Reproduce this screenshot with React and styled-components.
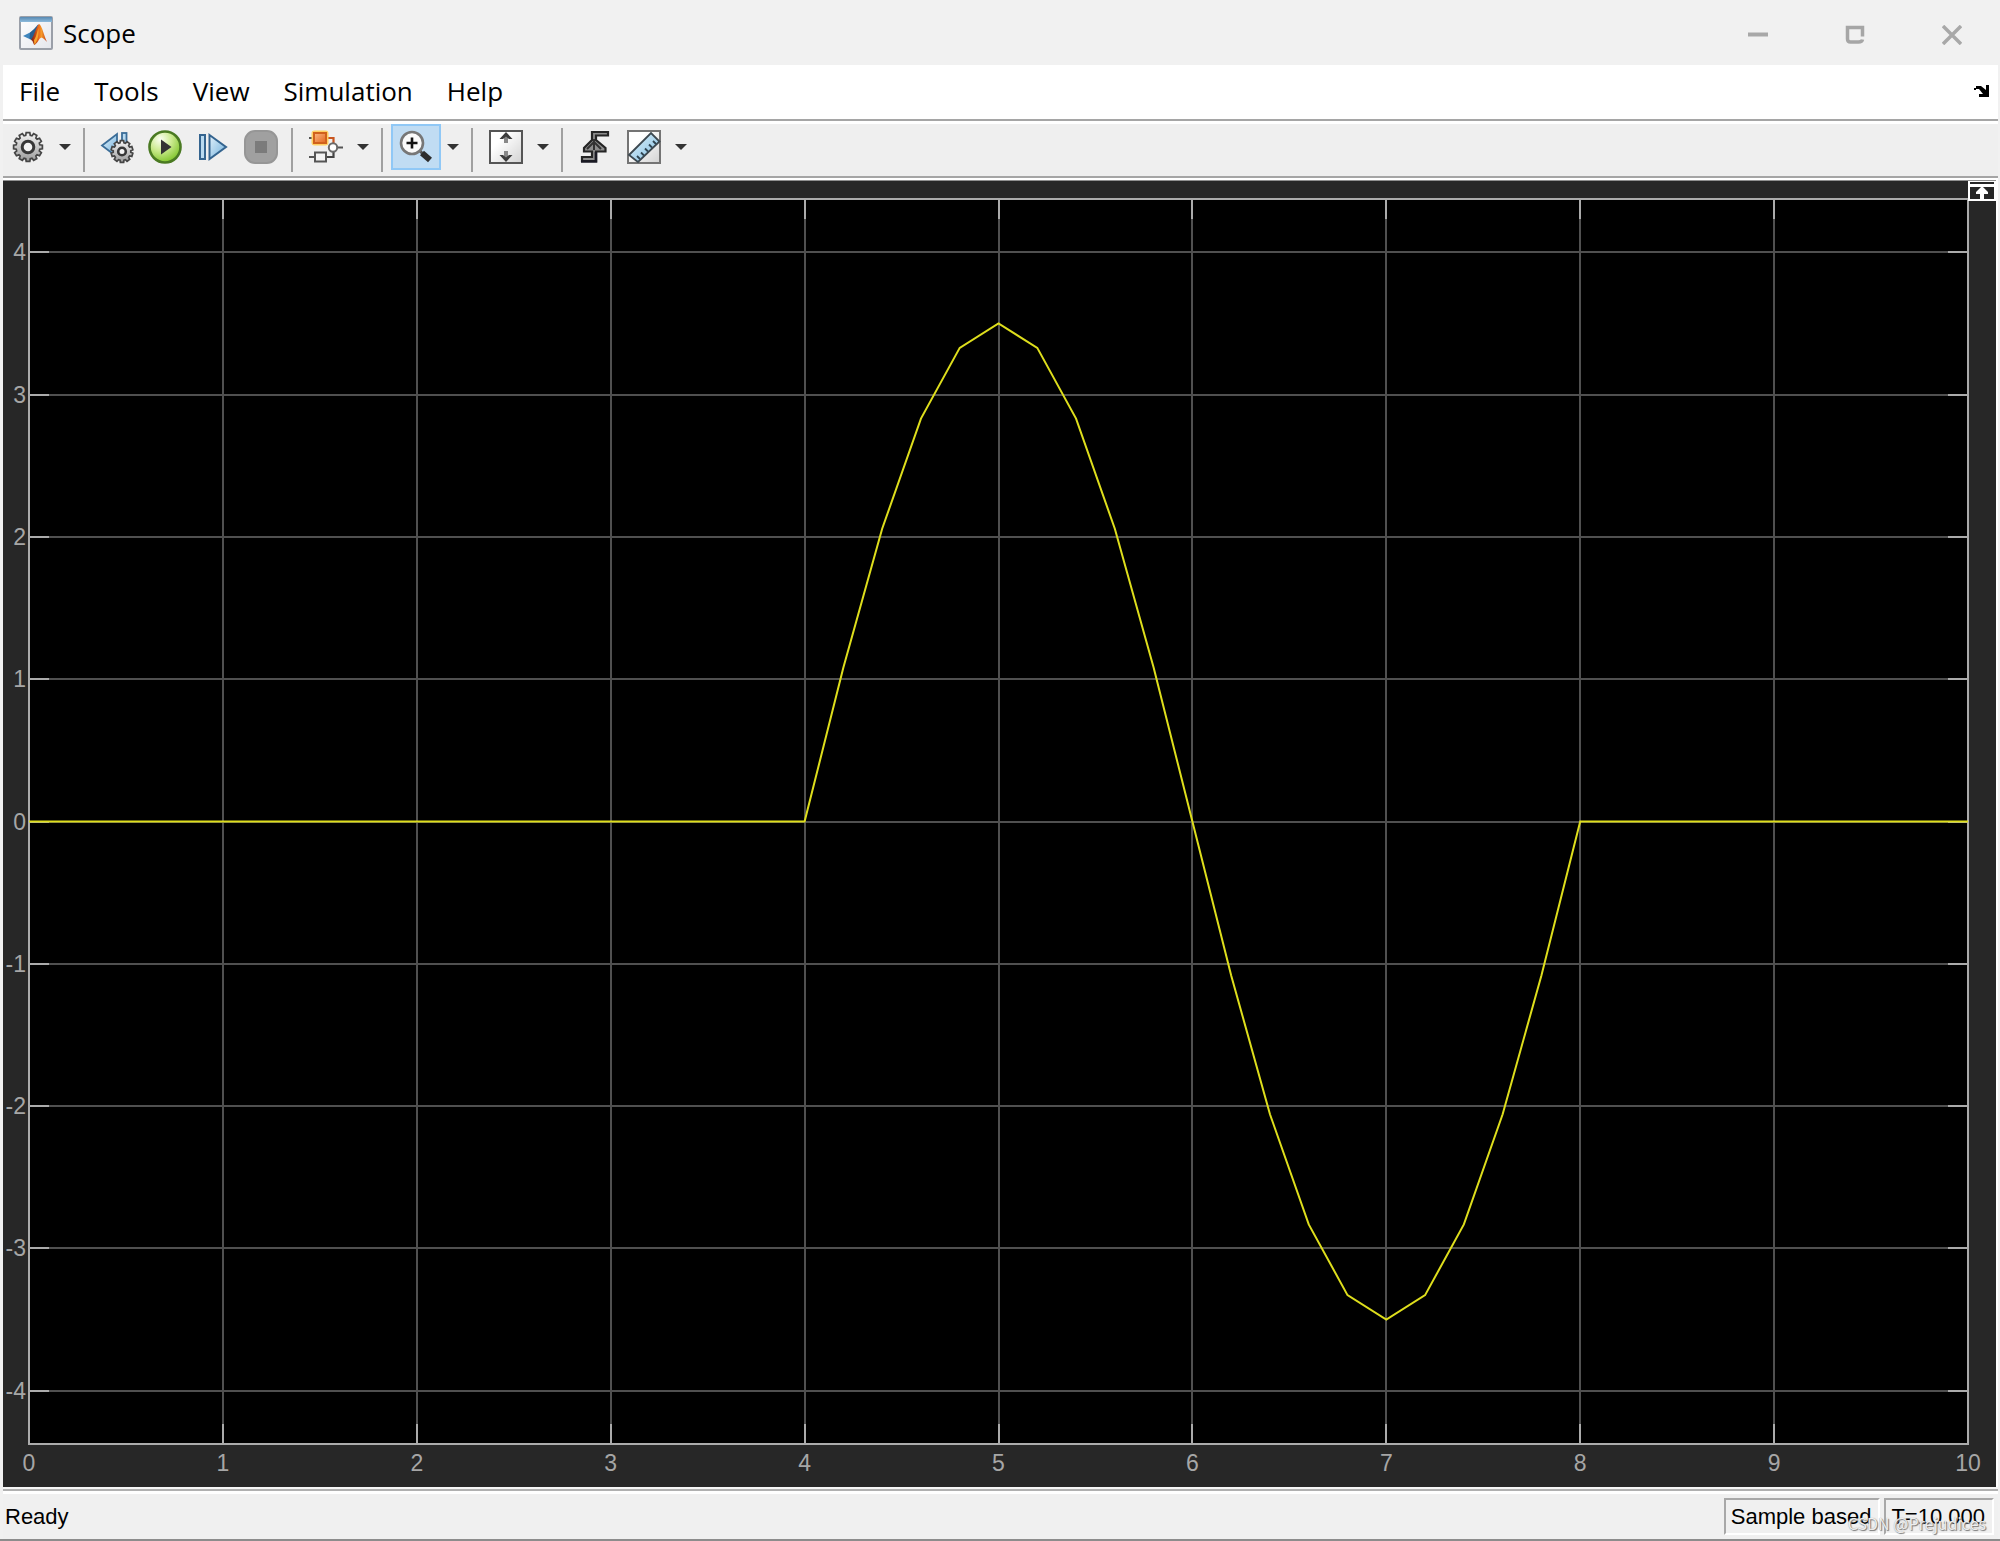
import React from 'react'
import styled, { createGlobalStyle } from 'styled-components'

const GlobalStyle = createGlobalStyle`
  * {
    box-sizing: border-box;
  }
  body {
    margin: 0;
    background: #f1f1f1;
  }
`

const Window = styled.div`
  display: flex;
  flex-direction: column;
  height: 100vh;
  min-height: 400px;
  background: #f1f1f1;
  border-bottom: 2px solid #8c8c8c;
  color: #000;
`

const TitleBar = styled.header`
  display: flex;
  align-items: center;
  height: 65px;
  padding-left: 19px;
`

const Title = styled.h1`
  flex: 1;
  margin: 0 0 0 10px;
  font-family: 'Open Sans', 'Noto Sans', sans-serif;
  font-size: 26px;
  font-weight: 400;
  line-height: 36px;
`

const WindowButton = styled.button`
  display: flex;
  align-items: center;
  justify-content: center;
  width: 97px;
  height: 65px;
  padding: 4px 0 0;
  border: none;
  background: none;
`

const Frame = styled.div`
  display: flex;
  flex-direction: column;
  flex: 1;
  min-height: 0;
  padding: 0 2px 0 3px;
`

const MenuBar = styled.nav`
  display: flex;
  align-items: center;
  gap: 34px;
  height: 54px;
  padding: 0 8px 2px 16px;
  background: #fff;
`

const MenuItem = styled.button`
  padding: 0;
  border: none;
  background: none;
  color: #000;
  font-family: 'Open Sans', 'Noto Sans', sans-serif;
  font-size: 26px;
  line-height: 34px;
`

const DockButton = styled.button`
  display: flex;
  margin-left: auto;
  padding: 0;
  border: none;
  background: none;
`

const Toolbar = styled.div`
  display: flex;
  align-items: flex-start;
  height: 59px;
  border-top: 2px solid #a5a5a5;
  border-bottom: 2px solid #a5a5a5;
  padding-top: 3px;
  background: linear-gradient(#fff 0 3px, #efefef 3px);
`

const ToolButton = styled.button`
  display: flex;
  align-items: center;
  justify-content: center;
  width: ${(props) => (props.$wide ? '50px' : '48px')};
  height: 46px;
  padding: 0;
  border: 2px solid ${(props) => (props.$active ? '#90c8f6' : 'transparent')};
  background: ${(props) => (props.$active ? '#c0dcf3' : 'none')};
`

const ArrowButton = styled.button`
  display: flex;
  align-items: center;
  justify-content: center;
  width: 24px;
  height: 46px;
  padding: 0;
  border: none;
  background: none;
`

const Separator = styled.span`
  width: 2px;
  height: 44px;
  margin: 4px 8px 0 6px;
  background: #a0a0a0;
`

const ScopePanel = styled.main`
  position: relative;
  flex: 1;
  min-height: 0;
  margin-right: 2px;
  padding: 18px 28px 43px 26px;
  border-top: 1px solid #8f8f8f;
  background: #272727;
`

const PanelEdge = styled.div`
  flex: 1;
  display: flex;
  flex-direction: column;
  min-height: 0;
  padding-top: 2px;
  background: #fff;
`

const Plot = styled.svg`
  display: block;
  width: 100%;
  height: 100%;
  overflow: visible;
`

const AxisText = styled.text`
  fill: #a6a6a6;
  font-family: 'Liberation Sans', Arial, sans-serif;
  font-size: 23px;
`

const MaximizeButton = styled.button`
  position: absolute;
  top: 0;
  right: 0;
  display: flex;
  padding: 0;
  border: none;
  background: #fff;
`

const StatusBar = styled.footer`
  position: relative;
  display: flex;
  align-items: center;
  gap: 4px;
  height: 52px;
  padding: 7px 4px 0 2px;
  background: linear-gradient(#f6f6f6 0 2px, #b0b0b0 2px 4px, #fff 4px 7px, #f0f0f0 7px);
  font-family: 'Liberation Sans', Arial, sans-serif;
  font-size: 22px;
  line-height: 33px;
`

const StatusText = styled.span`
  flex: 1;
`

const StatusCell = styled.span`
  height: 37px;
  padding: 0 7px 0 5px;
  border: 2px solid;
  border-color: #a8a8a8 #fff #fff #a8a8a8;
`

const Watermark = styled.span`
  position: absolute;
  right: 12px;
  bottom: 6px;
  color: rgba(255, 255, 255, 0.85);
  font-family: 'Noto Sans CJK SC', sans-serif;
  font-size: 16px;
  line-height: 20px;
  text-shadow: 1px 1px 1px #777, 0 0 1px #999;
`

// outline of a toothed wheel
const gearPath = (cx, cy, outer, inner, teeth) => {
  const step = (Math.PI * 2) / teeth
  const points = []
  for (let i = 0; i < teeth; i++) {
    const a = i * step - Math.PI / 2
    const corners = [
      [inner, -0.36],
      [outer, -0.24],
      [outer, 0.24],
      [inner, 0.36],
    ]
    corners.forEach(([r, k]) => {
      const x = cx + r * Math.cos(a + k * step)
      const y = cy + r * Math.sin(a + k * step)
      points.push(`${x.toFixed(2)} ${y.toFixed(2)}`)
    })
  }
  return `M${points.join('L')}Z`
}

const Icon = ({ children, size = 34 }) => (
  <svg width={size} height={size} viewBox="0 0 34 34" fill="none" aria-hidden="true">
    {children}
  </svg>
)

const AppIcon = () => (
  <svg width="34" height="34" viewBox="0 0 34 34" aria-hidden="true">
    <defs>
      <linearGradient id="appBar" x1="0" y1="0" x2="0" y2="1">
        <stop offset="0" stopColor="#5889b2" />
        <stop offset="1" stopColor="#8dbbdc" />
      </linearGradient>
      <linearGradient id="appPage" x1="0" y1="0" x2="1" y2="1">
        <stop offset="0" stopColor="#fff" />
        <stop offset="1" stopColor="#e4e6ec" />
      </linearGradient>
      <linearGradient id="appFlame" x1="0" y1="0" x2="1" y2="0">
        <stop offset="0" stopColor="#7a1c12" />
        <stop offset="0.45" stopColor="#e8641b" />
        <stop offset="0.65" stopColor="#f59a2a" />
        <stop offset="1" stopColor="#c23a14" />
      </linearGradient>
    </defs>
    <rect x="1" y="1" width="32" height="32" rx="1" fill="url(#appPage)" stroke="#9a9fa8" strokeWidth="2" />
    <rect x="1" y="1" width="32" height="5" fill="url(#appBar)" />
    <path d="M4 20L11 16.500L14 18L10.500 23Z" fill="#3f86bd" />
    <path d="M11 16.500L15 13L19.500 8L17 17L12.500 24L10.500 23Z" fill="#285f91" />
    <path d="M20 8C17 11 16 18 12 24C14 24 14 28 15.500 29C19 27 20 22 22.500 21.500C24.500 22 26 24 28 26C25 20 23 9 20 8Z" fill="url(#appFlame)" />
    <path d="M15 24C17 22 18 16 19.500 12C20 18 19 24 15.500 29Z" fill="#f8a32c" />
  </svg>
)

const GearIcon = () => (
  <Icon>
    <defs>
      <linearGradient id="gearFill" x1="0" y1="0" x2="0" y2="1">
        <stop offset="0" stopColor="#f5f5f5" />
        <stop offset="1" stopColor="#9a9a9a" />
      </linearGradient>
    </defs>
    <path d={gearPath(17, 17, 14.5, 12, 12)} fill="url(#gearFill)" stroke="#454545" strokeWidth="1.700" />
    <circle cx="17" cy="17" r="5.800" fill="#f4f4f4" stroke="#383838" strokeWidth="3" />
  </Icon>
)

const StepBackIcon = () => (
  <Icon>
    <defs>
      <linearGradient id="blueFill" x1="0" y1="0" x2="1" y2="1">
        <stop offset="0" stopColor="#e3f1fb" />
        <stop offset="1" stopColor="#6fb0dc" />
      </linearGradient>
    </defs>
    <path d="M17 4V27L2 15.500Z" fill="url(#blueFill)" stroke="#3b6d98" strokeWidth="1.800" />
    <rect x="22" y="3" width="4.500" height="14" fill="#b9daf0" stroke="#3b6d98" strokeWidth="1.800" />
    <path d={gearPath(22, 21.5, 11, 8.8, 10)} fill="url(#gearFill)" stroke="#454545" strokeWidth="1.700" />
    <circle cx="22" cy="21.500" r="3.800" fill="#f4f4f4" stroke="#383838" strokeWidth="2.600" />
  </Icon>
)

const RunIcon = () => (
  <Icon>
    <defs>
      <radialGradient id="runFill" cx="0.35" cy="0.25" r="0.8">
        <stop offset="0" stopColor="#fbfef2" />
        <stop offset="0.45" stopColor="#cdeb92" />
        <stop offset="1" stopColor="#7bc225" />
      </radialGradient>
    </defs>
    <circle cx="17" cy="17" r="15.500" fill="url(#runFill)" stroke="#4a7a22" strokeWidth="2.600" />
    <path d="M13 9.500L23.500 17L13 24.500Z" fill="#333" />
  </Icon>
)

const StepIcon = () => (
  <Icon>
    <rect x="4" y="5" width="5" height="24" fill="#b9daf0" stroke="#34648f" strokeWidth="2" />
    <path d="M13.500 5L30 17L13.500 29Z" fill="url(#blueFill)" stroke="#34648f" strokeWidth="2" />
  </Icon>
)

const StopIcon = () => (
  <Icon>
    <rect x="1" y="1" width="32" height="32" rx="10" fill="#a0a0a0" stroke="#969696" strokeWidth="2" />
    <rect x="11" y="11" width="12" height="12" fill="#7b7b7b" />
  </Icon>
)

const HighlightIcon = () => (
  <Icon>
    <defs>
      <linearGradient id="blockFill" x1="0" y1="0" x2="1" y2="1">
        <stop offset="0" stopColor="#fbb884" />
        <stop offset="1" stopColor="#e2661c" />
      </linearGradient>
    </defs>
    <path d="M0 8H5M0 27H6M28 17.500H34" stroke="#555" strokeWidth="2.200" />
    <path d="M18 8H24.500V14" stroke="#c9551f" strokeWidth="2.200" />
    <path d="M17 27H24.500V22" stroke="#444" strokeWidth="2.200" />
    <rect x="2.500" y="0.500" width="17" height="15" rx="3" fill="#ffcf62" />
    <rect x="5" y="3" width="12" height="10" fill="url(#blockFill)" stroke="#d0611c" strokeWidth="2" />
    <rect x="6" y="22.500" width="11" height="9" fill="#f3f3f3" stroke="#555" strokeWidth="2" />
    <circle cx="24" cy="17.500" r="4.200" fill="#fff" stroke="#6a6a6a" strokeWidth="2" />
  </Icon>
)

const ZoomIcon = () => (
  <Icon>
    <path d="M20 20L24 24" stroke="#555" strokeWidth="3" />
    <path d="M23 23L31 30" stroke="#2d2d2d" strokeWidth="6" />
    <circle cx="13" cy="13" r="11" fill="#fafafa" stroke="#777" strokeWidth="2.600" />
    <path d="M13 7.500V18.500M7.500 13H18.500" stroke="#111" strokeWidth="2.600" />
  </Icon>
)

const FitIcon = () => (
  <Icon>
    <defs>
      <linearGradient id="pageFill" x1="0" y1="0" x2="1" y2="1">
        <stop offset="0.300" stopColor="#fff" />
        <stop offset="1" stopColor="#d2d2d2" />
      </linearGradient>
    </defs>
    <rect x="1" y="1" width="32" height="32" fill="url(#pageFill)" stroke="#555" strokeWidth="2" />
    <path d="M17 5V13M17 29V21" stroke="#888" strokeWidth="4" />
    <path d="M17 2L23.500 9H20L17 6.500L14 9H10.500ZM17 32L23.500 25H20L17 27.500L14 25H10.500Z" fill="#3c3c3c" />
  </Icon>
)

const TriggerIcon = () => (
  <Icon>
    <path
      d="M14 2H30V5.500H18V10L27.500 18V21.500H18V31H4V27H14V21.500H6V18L14 10Z"
      fill="#8d8d8d"
      stroke="#252525"
      strokeWidth="2.200"
    />
    <path d="M16 9V20M9 19L16 12L23 19" stroke="#333" strokeWidth="2" />
    <path d="M3 31.500H18V22" stroke="#191923" strokeWidth="2.600" />
  </Icon>
)

const MeasureIcon = () => (
  <Icon>
    <defs>
      <linearGradient id="rulerFill" x1="0" y1="0" x2="1" y2="1">
        <stop offset="0" stopColor="#e4f4fc" />
        <stop offset="1" stopColor="#7dbbe0" />
      </linearGradient>
    </defs>
    <rect x="1" y="1" width="32" height="32" fill="url(#pageFill)" stroke="#747474" strokeWidth="2" />
    <path d="M2 25L24 3L32.500 11.500L11 32Z" fill="url(#rulerFill)" stroke="#3c4850" strokeWidth="1.800" />
    <path d="M13 29L10 26M17 25.500L14 22.500M21 21.500L18 18.500M25 17.500L22 14.500M29 14L26 11" stroke="#2f4552" strokeWidth="1.800" />
  </Icon>
)

const DropArrow = ({ label }) => (
  <ArrowButton aria-label={label}>
    <svg width="12" height="6" viewBox="0 0 12 6" aria-hidden="true">
      <path d="M0 0H12L6 6Z" fill="#333" />
    </svg>
  </ArrowButton>
)

const menus = ['File', 'Tools', 'View', 'Simulation', 'Help']

const T_END = 10
const Y_MAX = 4.375
const xTicks = [0, 1, 2, 3, 4, 5, 6, 7, 8, 9, 10]
const yTicks = [4, 3, 2, 1, 0, -1, -2, -3, -4]

// one sine period between t = 4 and t = 8, zero elsewhere
const signal = (t) => (t < 4 || t > 8 ? 0 : 3.5 * Math.sin(((t - 4) * Math.PI) / 2))

const samples = []
for (let i = 0; i <= 50; i++) {
  const t = i / 5
  samples.push(`${t},${(-signal(t)).toFixed(4)}`)
}

const xPos = (x) => `${(x / T_END) * 100}%`
const yPos = (y) => `${((Y_MAX - y) / (Y_MAX * 2)) * 100}%`

const ScopePlot = () => (
  <Plot role="img" aria-label="Scope signal">
    <rect width="100%" height="100%" fill="#000" />
    <g stroke="#505050" strokeWidth="2" shapeRendering="crispEdges">
      {xTicks.slice(1, -1).map((x) => (
        <line key={x} x1={xPos(x)} x2={xPos(x)} y1="0" y2="100%" />
      ))}
      {yTicks.map((y) => (
        <line key={y} x1="0" x2="100%" y1={yPos(y)} y2={yPos(y)} />
      ))}
    </g>
    <g stroke="#ababab" strokeWidth="2" shapeRendering="crispEdges">
      {xTicks.slice(1, -1).map((x) => (
        <React.Fragment key={x}>
          <line x1={xPos(x)} x2={xPos(x)} y1="0" y2="20" />
          <svg y="100%" overflow="visible">
            <line x1={xPos(x)} x2={xPos(x)} y1="-20" y2="0" />
          </svg>
        </React.Fragment>
      ))}
      {yTicks.map((y) => (
        <React.Fragment key={y}>
          <line x1="0" x2="20" y1={yPos(y)} y2={yPos(y)} />
          <svg x="100%" overflow="visible">
            <line x1="-20" x2="0" y1={yPos(y)} y2={yPos(y)} />
          </svg>
        </React.Fragment>
      ))}
      <rect width="100%" height="100%" fill="none" />
    </g>
    <svg
      width="100%"
      height="100%"
      viewBox={`0 ${-Y_MAX} ${T_END} ${Y_MAX * 2}`}
      preserveAspectRatio="none"
    >
      <polyline
        points={samples.join(' ')}
        fill="none"
        stroke="#dede1c"
        strokeWidth="2"
        vectorEffect="non-scaling-stroke"
      />
    </svg>
    {yTicks.map((y) => (
      <AxisText key={y} x="-3" y={yPos(y)} dy="8" textAnchor="end">
        {y}
      </AxisText>
    ))}
    <svg y="100%" overflow="visible">
      {xTicks.map((x) => (
        <AxisText key={x} x={xPos(x)} y="27" textAnchor="middle">
          {x}
        </AxisText>
      ))}
    </svg>
  </Plot>
)

const App = () => (
  <>
    <GlobalStyle />
    <Window>
      <TitleBar>
        <AppIcon />
        <Title>Scope</Title>
        <WindowButton aria-label="Minimize">
          <svg width="20" height="20" viewBox="0 0 20 20">
            <path d="M0 9.500H20" stroke="#a8a8a8" strokeWidth="4" />
          </svg>
        </WindowButton>
        <WindowButton aria-label="Restore">
          <svg width="20" height="20" viewBox="0 0 20 20" fill="none">
            <path d="M17.500 11.500V2.500H2.500V14Q2.500 17 5.500 17H13.500Q17 17 17.500 14.500" stroke="#a6a6a6" strokeWidth="3.500" />
          </svg>
        </WindowButton>
        <WindowButton aria-label="Close">
          <svg width="20" height="20" viewBox="0 0 20 20" fill="none">
            <path d="M1 1L19 19M19 1L1 19" stroke="#a8a8a8" strokeWidth="3.500" />
          </svg>
        </WindowButton>
      </TitleBar>
      <Frame>
        <MenuBar>
          {menus.map((name) => (
            <MenuItem key={name}>{name}</MenuItem>
          ))}
          <DockButton aria-label="Dock window">
            <svg width="16" height="12" viewBox="0 0 16 12" aria-hidden="true">
              <path d="M0 3H2V1H7L12 5V0H15V12H5V9H9L5 4H2V5H0Z" fill="#000" />
            </svg>
          </DockButton>
        </MenuBar>
        <Toolbar role="toolbar">
          <ToolButton $wide aria-label="Configuration properties">
            <GearIcon />
          </ToolButton>
          <DropArrow label="Configuration options" />
          <Separator />
          <ToolButton aria-label="Stepping options">
            <StepBackIcon />
          </ToolButton>
          <ToolButton aria-label="Run">
            <RunIcon />
          </ToolButton>
          <ToolButton aria-label="Step forward">
            <StepIcon />
          </ToolButton>
          <ToolButton aria-label="Stop">
            <StopIcon />
          </ToolButton>
          <Separator />
          <ToolButton $wide aria-label="Highlight block">
            <HighlightIcon />
          </ToolButton>
          <DropArrow label="Highlight options" />
          <Separator />
          <ToolButton $wide $active aria-label="Zoom">
            <ZoomIcon />
          </ToolButton>
          <DropArrow label="Zoom options" />
          <Separator />
          <ToolButton $wide aria-label="Scale axes">
            <FitIcon />
          </ToolButton>
          <DropArrow label="Scale options" />
          <Separator />
          <ToolButton aria-label="Triggers">
            <TriggerIcon />
          </ToolButton>
          <ToolButton $wide aria-label="Measurements">
            <MeasureIcon />
          </ToolButton>
          <DropArrow label="Measurement options" />
        </Toolbar>
        <PanelEdge>
          <ScopePanel>
            <ScopePlot />
            <MaximizeButton aria-label="Maximize axes">
              <svg width="28" height="20" viewBox="0 0 28 20" aria-hidden="true">
                <path d="M2 1H26V3H2ZM2 6H26V18H2Z" fill="#272727" />
                <path d="M14 5L20 11V13H16V18H12V13H8V11Z" fill="#fff" />
              </svg>
            </MaximizeButton>
          </ScopePanel>
        </PanelEdge>
        <StatusBar>
          <StatusText>Ready</StatusText>
          <StatusCell>Sample based</StatusCell>
          <StatusCell>T=10.000</StatusCell>
          <Watermark>CSDN @Prejudices</Watermark>
        </StatusBar>
      </Frame>
    </Window>
  </>
)

export default App
